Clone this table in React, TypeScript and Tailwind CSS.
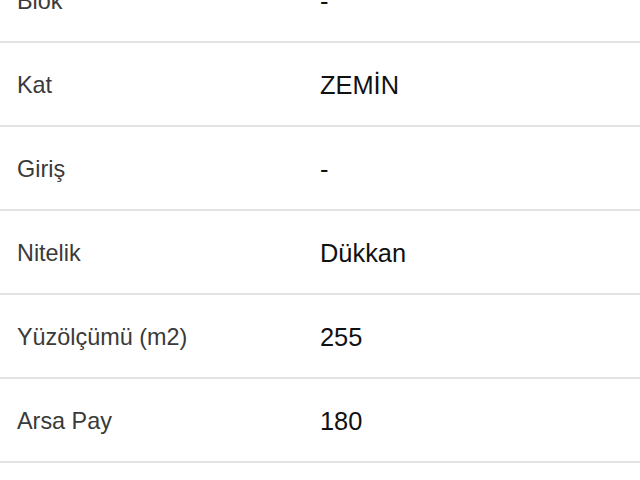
import React from 'react';

const rows: { label: string; value: string }[] = [
  { label: 'Blok', value: '-' },
  { label: 'Kat', value: 'ZEMİN' },
  { label: 'Giriş', value: '-' },
  { label: 'Nitelik', value: 'Dükkan' },
  { label: 'Yüzölçümü (m2)', value: '255' },
  { label: 'Arsa Pay', value: '180' },
];

const App: React.FC = () => {
  return (
    <div
      className="w-[640px] h-[480px] overflow-hidden bg-white"
      style={{ fontFamily: '"Liberation Sans", Arial, sans-serif' }}
    >
      <div className="-mt-[41px]">
        {rows.map((row) => (
          <div
            key={row.label}
            className="flex items-center h-[84px] border-b-2 border-[#e2e2e2] pl-[17px] pt-[3px]"
          >
            <div className="w-[303px] text-[23.4px] text-[#3a3a3a]">{row.label}</div>
            <div className="text-[25.4px] text-[#111111]">{row.value}</div>
          </div>
        ))}
      </div>
    </div>
  );
};

export default App;
